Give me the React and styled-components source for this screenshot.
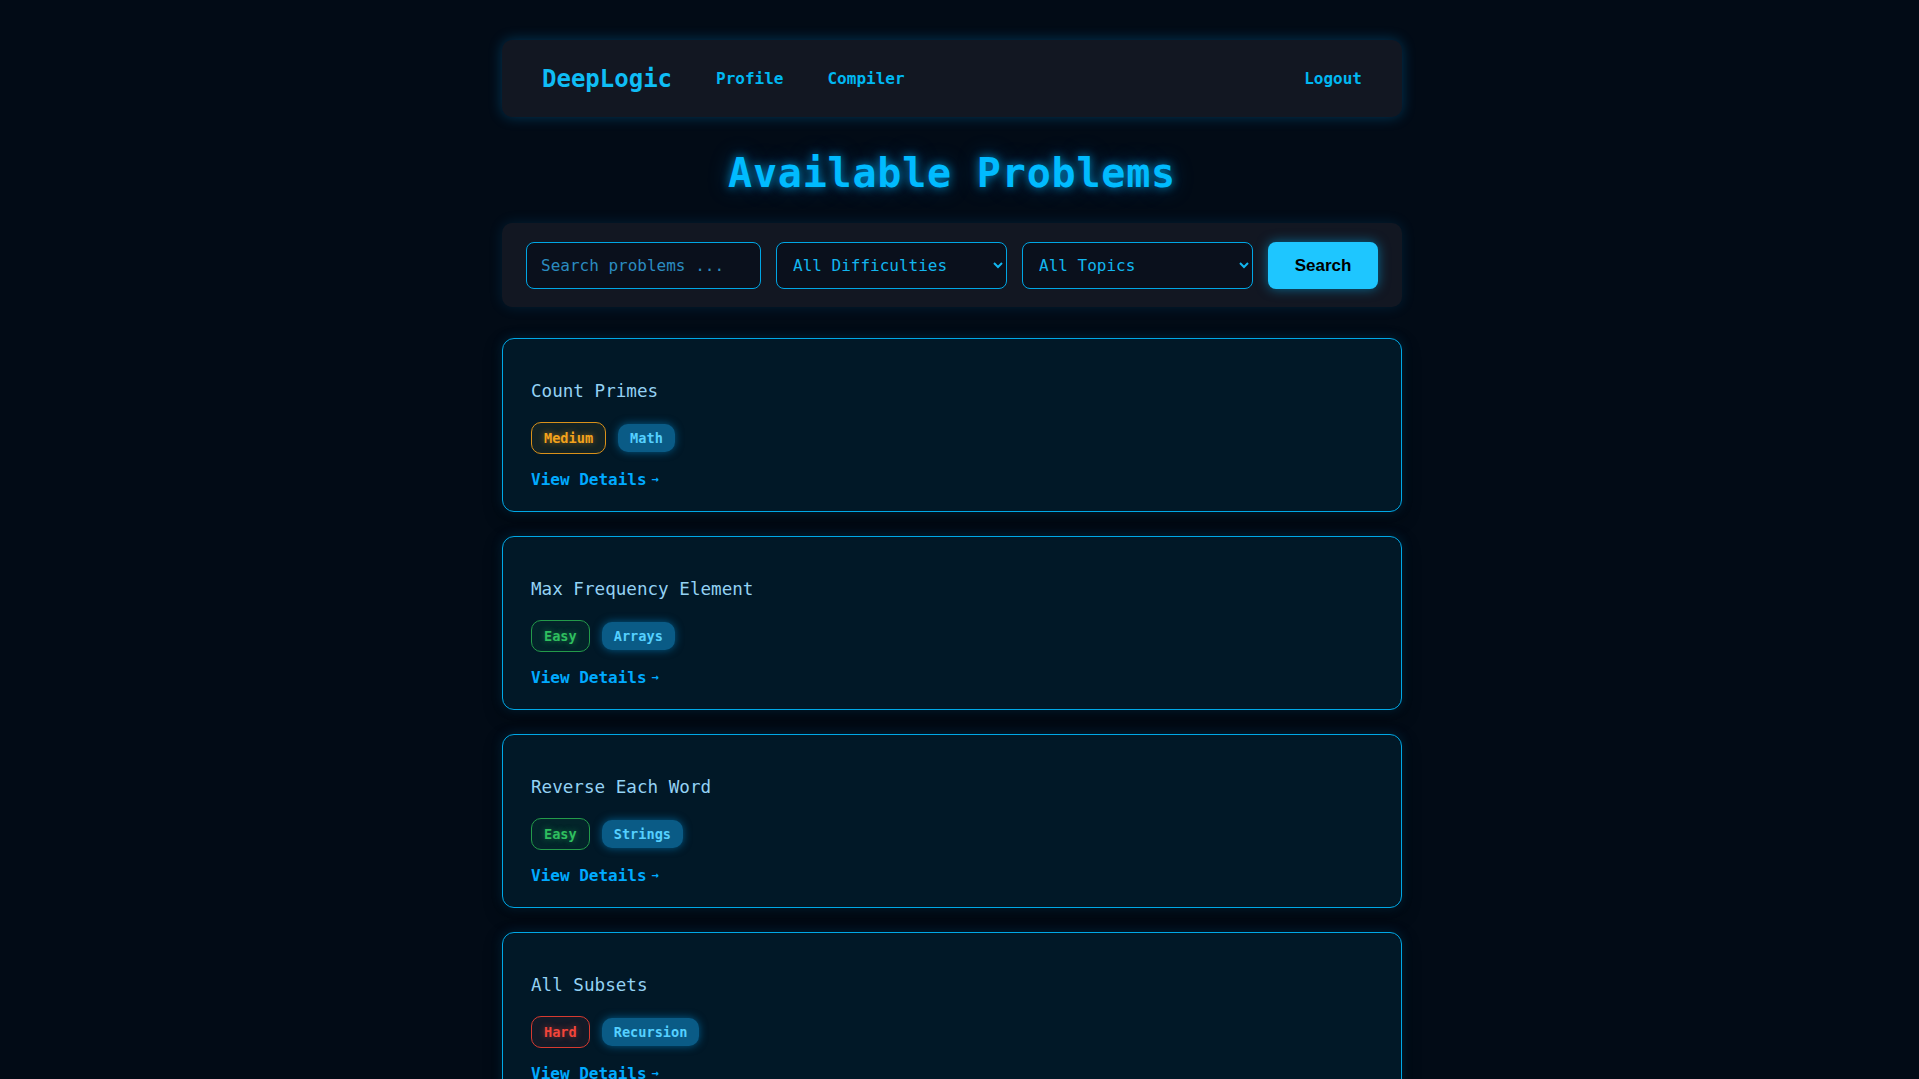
import React from "react"
import styled, { createGlobalStyle } from "styled-components"

const problems = [
  { title: "Count Primes", difficulty: "Medium", topic: "Math" },
  { title: "Max Frequency Element", difficulty: "Easy", topic: "Arrays" },
  { title: "Reverse Each Word", difficulty: "Easy", topic: "Strings" },
  { title: "All Subsets", difficulty: "Hard", topic: "Recursion" },
  { title: "Two Sum", difficulty: "Easy", topic: "Arrays" },
  { title: "Valid Parentheses", difficulty: "Easy", topic: "Stacks" },
  { title: "Longest Palindrome", difficulty: "Medium", topic: "Strings" },
  { title: "N Queens", difficulty: "Hard", topic: "Recursion" },
  { title: "GCD of Array", difficulty: "Easy", topic: "Math" },
  { title: "Merge Intervals", difficulty: "Medium", topic: "Arrays" },
  { title: "Climbing Stairs", difficulty: "Easy", topic: "DP" },
  { title: "Word Break", difficulty: "Medium", topic: "DP" },
  { title: "Binary Search", difficulty: "Easy", topic: "Arrays" },
  { title: "Power Set Sum", difficulty: "Medium", topic: "Recursion" },
  { title: "Anagram Groups", difficulty: "Medium", topic: "Strings" },
  { title: "Trapping Rain Water", difficulty: "Hard", topic: "Arrays" },
]

const levelColors = {
  Easy: { text: "#2fbf5f", border: "#239a4a", bg: "rgba(40, 180, 90, 0.08)" },
  Medium: { text: "#f3a21c", border: "#d9911a", bg: "rgba(240, 160, 30, 0.08)" },
  Hard: { text: "#f2453a", border: "#d63a30", bg: "rgba(240, 70, 58, 0.08)" },
}

const GlobalStyle = createGlobalStyle`
  :root {
    color-scheme: dark;
  }

  html {
    overflow-y: scroll;
    background-color: #020b16;
  }

  body {
    /* keep the layout width of a page with a classic scrollbar */
    margin: 0 15px 0 0;
    background-color: #020b16;
    font-family: "DejaVu Sans Mono", "Liberation Mono", monospace;
    color: #00bfff;
  }
`

const App = () => {
  return (
    <>
      <GlobalStyle />
      <Page>
        <Navbar>
          <Brand>DeepLogic</Brand>
          <NavLink>Profile</NavLink>
          <NavLink>Compiler</NavLink>
          <Logout>Logout</Logout>
        </Navbar>

        <Heading>Available Problems</Heading>

        <FilterBar>
          <SearchInput placeholder="Search problems ..." />
          <Select defaultValue="all">
            <option value="all">All Difficulties</option>
            <option value="easy">Easy</option>
            <option value="medium">Medium</option>
            <option value="hard">Hard</option>
          </Select>
          <Select defaultValue="all">
            <option value="all">All Topics</option>
            <option value="arrays">Arrays</option>
            <option value="strings">Strings</option>
            <option value="math">Math</option>
          </Select>
          <SearchButton>Search</SearchButton>
        </FilterBar>

        <List>
          {problems.map((p) => (
            <Card key={p.title}>
              <Title>{p.title}</Title>
              <Badges>
                <Level level={p.difficulty}>{p.difficulty}</Level>
                <Topic>{p.topic}</Topic>
              </Badges>
              <Details href="#">
                View Details<Arrow>→</Arrow>
              </Details>
            </Card>
          ))}
        </List>
      </Page>
    </>
  )
}

const Page = styled.div`
  max-width: 900px;
  margin: 0 auto;
  padding: 40px 0 8px;
`

const Navbar = styled.nav`
  display: flex;
  align-items: center;
  gap: 44px;
  height: 77px;
  padding: 0 40px;
  background-color: #121722;
  border-radius: 10px;
  box-shadow: 0 0 14px rgba(0, 170, 255, 0.28);
`

const Brand = styled.div`
  font-size: 24px;
  font-weight: bold;
  color: #0fbdf5;
`

const NavLink = styled.a`
  font-size: 16px;
  font-weight: bold;
  color: #00b8f2;
  cursor: pointer;
`

const Logout = styled(NavLink)`
  margin-left: auto;
`

const Heading = styled.h1`
  margin: 33px 0 27px;
  font-size: 40px;
  line-height: 46px;
  letter-spacing: 0.8px;
  text-align: center;
  font-weight: bold;
  color: #00bbff;
  text-shadow: 0 0 10px rgba(0, 180, 255, 0.7), 0 0 22px rgba(0, 160, 255, 0.35);
`

const FilterBar = styled.div`
  display: flex;
  gap: 15px;
  padding: 19px 24px 18px;
  margin-bottom: 31px;
  background-color: #121722;
  border-radius: 10px;
  box-shadow: 0 0 14px rgba(0, 150, 230, 0.15);
`

const fieldStyles = `
  flex: 1;
  min-width: 0;
  height: 47px;
  box-sizing: border-box;
  background-color: #0a101c;
  border: 1px solid #00a6e4;
  border-radius: 8px;
  font-family: "DejaVu Sans Mono", "Liberation Mono", monospace;
  font-size: 16px;
  color: #12b6ef;
  outline: none;
`

const SearchInput = styled.input`
  ${fieldStyles}
  padding: 0 14px;

  &::placeholder {
    color: #2a8cc0;
  }
`

const Select = styled.select`
  ${fieldStyles}
  padding: 0 12px;
  cursor: pointer;
`

const SearchButton = styled.button`
  width: 110px;
  height: 47px;
  border: none;
  border-radius: 8px;
  background-color: #1ec6ff;
  color: #000;
  font-family: "Liberation Sans", Arial, sans-serif;
  font-size: 17px;
  font-weight: bold;
  cursor: pointer;
  box-shadow: 0 0 12px rgba(0, 190, 255, 0.5);
`

const List = styled.div`
  display: flex;
  flex-direction: column;
  gap: 24px;
`

const Card = styled.div`
  padding: 24px 28px 22px;
  background-color: #011827;
  border: 1px solid #00a8e6;
  border-radius: 12px;
  box-shadow: 0 0 12px rgba(0, 150, 230, 0.18), 0 6px 18px rgba(0, 0, 0, 0.45);
`

const Title = styled.h3`
  margin: 18px 0 20px;
  font-size: 17.6px;
  line-height: 21px;
  font-weight: normal;
  color: #94d2f4;
`

const Badges = styled.div`
  display: flex;
  align-items: center;
  gap: 12px;
  height: 32px;
`

const Badge = styled.span`
  font-size: 13.6px;
  font-weight: bold;
  border-radius: 10px;
`

const Level = styled(Badge)`
  padding: 7px 12px;
  line-height: 16px;
  color: ${({ level }) => levelColors[level].text};
  border: 1px solid ${({ level }) => levelColors[level].border};
  background-color: ${({ level }) => levelColors[level].bg};
  text-shadow: 0 0 6px ${({ level }) => levelColors[level].text}88;
`

const Topic = styled(Badge)`
  padding: 6px 12px;
  line-height: 16px;
  color: #55d0ff;
  background-color: #0a5b86;
  box-shadow: 0 0 8px rgba(0, 160, 240, 0.5);
`

const Details = styled.a`
  display: inline-flex;
  align-items: center;
  margin-top: 16px;
  font-size: 16px;
  line-height: 19px;
  font-weight: bold;
  color: #00aaff;
  text-decoration: none;
`

const Arrow = styled.span`
  font-size: 12px;
  margin-left: 5px;
`

export default App
